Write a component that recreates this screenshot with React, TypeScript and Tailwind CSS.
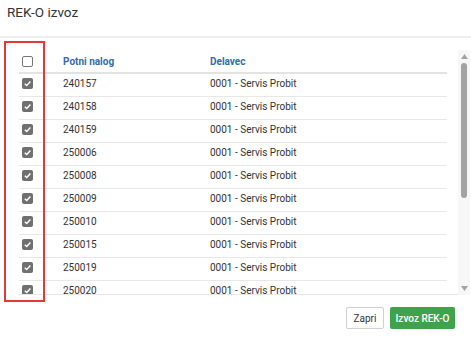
const rows = [
  "240157",
  "240158",
  "240159",
  "250006",
  "250008",
  "250009",
  "250010",
  "250015",
  "250019",
  "250020",
];

const Checked = () => (
  <div className="w-[11px] h-[11px] rounded-[2px] bg-[#707070] flex items-center justify-center">
    <svg width="9" height="9" viewBox="0 0 10 10">
      <path d="M2 5.2 L4.2 7.3 L8.2 2.8" fill="none" stroke="#fff" strokeWidth="1.6" />
    </svg>
  </div>
);

const App = () => {
  return (
    <div className="relative w-[471px] h-[339px] bg-white font-['Roboto',sans-serif] text-[#333]">
      <div className="h-[38px] border-b-2 border-[#efefef] pl-[7px] pt-[3px]">
        <h1 className="text-[13.5px] leading-[18px]">REK-O izvoz</h1>
      </div>

      <div className="flex pt-[12px] pl-[19px] pr-[1px]">
        <div className="w-[439px] h-[245px] overflow-hidden border-b border-[#e8e8e8]">
          <div className="w-[428px]">
            <div className="flex items-center h-[24px] border-b-2 border-[#e3e3e3] text-[10px] font-bold text-[#2e6db4]">
              <div className="w-[44px] pl-[3px]">
                <div className="w-[11px] h-[11px] rounded-[2px] border border-[#777] bg-white" />
              </div>
              <div className="w-[147px]">Potni nalog</div>
              <div>Delavec</div>
            </div>
            {rows.map((r) => (
              <div key={r} className="flex items-center h-[23px] pb-[3px] border-b border-[#e8e8e8] text-[10px]">
                <div className="w-[44px] pl-[3px]">
                  <Checked />
                </div>
                <div className="w-[147px]">{r}</div>
                <div>0001 - Servis Probit</div>
              </div>
            ))}
          </div>
        </div>
        <div className="w-[12px] h-[245px] bg-[#f7f7f7] flex flex-col items-center">
          <svg width="7" height="5" viewBox="0 0 7 5" className="mt-[4px]">
            <path d="M3.5 0 L7 5 L0 5 Z" fill="#a3a3a3" />
          </svg>
          <div className="w-[6px] h-[135px] mt-[4px] rounded-full bg-[#a3a3a3]" />
          <div className="flex-1" />
          <svg width="7" height="5" viewBox="0 0 7 5" className="mb-[4px]">
            <path d="M0 0 L7 0 L3.5 5 Z" fill="#a3a3a3" />
          </svg>
        </div>
      </div>

      <div className="flex justify-end gap-[6px] pr-[16px] pt-[12px]">
        <button className="h-[22px] w-[38px] rounded-[2px] border border-[#d0d0d0] bg-white text-[10px] text-[#333]">
          Zapri
        </button>
        <button className="h-[22px] w-[65px] rounded-[2px] bg-[#3fa34d] text-[10px] font-medium text-white">
          Izvoz REK-O
        </button>
      </div>

      <div className="absolute left-[4px] top-[41px] w-[41px] h-[261px] border-2 border-[#e53935]" />
    </div>
  );
};

export default App;
